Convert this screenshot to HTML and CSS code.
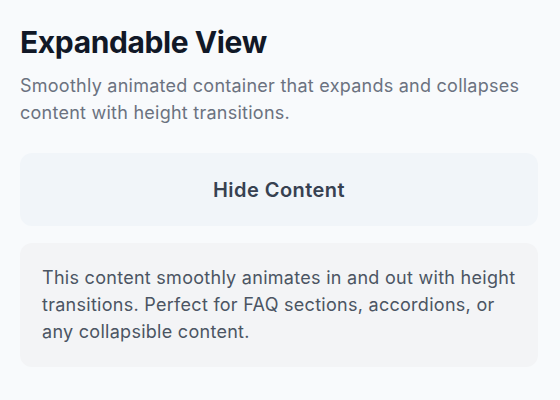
FILE: index.html
```html
<!DOCTYPE html>
<html>
<head>
<meta charset="utf-8">
<link rel="stylesheet" href="styles.css">
</head>
<body>
<div class="page">
  <h1 class="title">Expandable View</h1>
  <p class="subtitle">Smoothly animated container that expands and collapses content with height transitions.</p>
  <button class="toggle">Hide Content</button>
  <div class="panel">
    <p class="panel-text">This content smoothly animates in and out with height transitions. Perfect for FAQ sections, accordions, or any collapsible content.</p>
  </div>
</div>
</body>
</html>
```
FILE: styles.css
```css
html, body {
  margin: 0;
  padding: 0;
  background: #f8fafc;
}
.page {
  font-family: Inter, "Noto Sans", sans-serif;
  padding: 24px 22px 0 20px;
  display: flex;
  flex-direction: column;
}
.title {
  margin: 0;
  font-size: 30px;
  font-weight: 700;
  line-height: 36px;
  color: #111827;
  letter-spacing: -0.4px;
}
.subtitle {
  margin: 12px -2px 0 0;
  font-size: 18px;
  line-height: 27px;
  color: #6b7280;
  letter-spacing: 0.25px;
}
.toggle {
  margin-top: 27px;
  height: 73px;
  border: none;
  border-radius: 12px;
  background: #f1f5f9;
  font-family: inherit;
  font-size: 20px;
  font-weight: 600;
  color: #374151;
  letter-spacing: 0.45px;
}
.panel {
  margin-top: 17px;
  background: #f3f4f6;
  border-radius: 12px;
  padding: 21px 20px 22px 22px;
}
.panel-text {
  margin: 0;
  font-size: 18px;
  line-height: 27px;
  color: #4b5563;
  letter-spacing: 0.28px;
}
```
